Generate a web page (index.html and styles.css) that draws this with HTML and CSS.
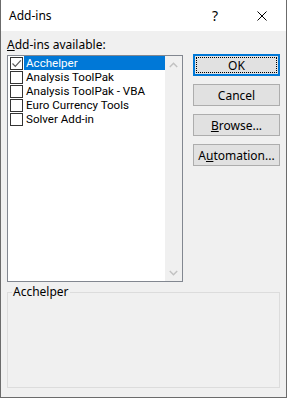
FILE: index.html
```html
<!DOCTYPE html>
<html lang="en">
<head>
  <meta charset="UTF-8" />
  <title>Add-ins</title>
  <link rel="stylesheet" href="styles.css">
</head>
<body>
  <div class="window">
    <div class="titlebar">
      <span class="title">Add-ins</span>
      <span class="help">?</span>
      <span class="close">
        <svg width="10" height="10" viewBox="0 0 10 10">
          <path d="M0.5 0.5 L9.5 9.5 M9.5 0.5 L0.5 9.5" stroke="#000" stroke-width="1" fill="none"/>
        </svg>
      </span>
    </div>

    <div class="content">
      <div class="main-row">
        <div class="list-col">
          <div class="list-label"><u>A</u>dd-ins available:</div>
          <div class="listbox">
            <div class="items">
              <div class="item">
                <span class="check checked">
                  <svg width="11" height="11" viewBox="0 0 11 11">
                    <path d="M1.5 5.5 L4.3 8.3 L9.8 2.3" stroke="#5a5a5a" stroke-width="1.2" fill="none"/>
                  </svg>
                </span>
                <span class="name selected">Acchelper</span>
              </div>
              <div class="item"><span class="check"></span><span class="name">Analysis ToolPak</span></div>
              <div class="item"><span class="check"></span><span class="name">Analysis ToolPak - VBA</span></div>
              <div class="item"><span class="check"></span><span class="name">Euro Currency Tools</span></div>
              <div class="item"><span class="check"></span><span class="name">Solver Add-in</span></div>
            </div>
            <div class="scrollbar">
              <div class="arrow">
                <svg width="9" height="6" viewBox="0 0 9 6">
                  <path d="M0.8 5 L4.5 1.3 L8.2 5" stroke="#c2c2c2" stroke-width="1.5" fill="none"/>
                </svg>
              </div>
              <div class="arrow">
                <svg width="9" height="6" viewBox="0 0 9 6">
                  <path d="M0.8 1 L4.5 4.7 L8.2 1" stroke="#c2c2c2" stroke-width="1.5" fill="none"/>
                </svg>
              </div>
            </div>
          </div>
        </div>

        <div class="buttons">
          <button class="btn default">OK</button>
          <button class="btn">Cancel</button>
          <button class="btn"><u>B</u>rowse...</button>
          <button class="btn">A<u>u</u>tomation...</button>
        </div>
      </div>

      <fieldset class="groupbox">
        <legend>Acchelper</legend>
      </fieldset>
    </div>
  </div>
</body>
</html>
```

FILE: styles.css
```css
body {
  margin: 0;
  font-family: "Noto Sans", sans-serif;
  font-size: 12px;
  color: #000;
  background: #f0f0f0;
}

.window {
  width: 287px;
  height: 398px;
  box-sizing: border-box;
  border: 1px solid #6b6b6b;
  border-top: none;
  background: #f0f0f0;
  display: flex;
  flex-direction: column;
}

.titlebar {
  height: 31px;
  background: #fff;
  display: flex;
  align-items: center;
  flex-shrink: 0;
}

.title {
  flex: 1;
  padding-left: 8px;
  font-size: 12px;
  line-height: 16px;
  padding-top: 1px;
}

.help {
  font-size: 14px;
  width: 14px;
  margin-right: 31px;
  line-height: 16px;
  padding-top: 1px;
}

.close {
  display: flex;
  width: 10px;
  height: 10px;
  margin-right: 19px;
  margin-top: 1px;
}

.content {
  flex: 1;
  padding: 6px 6px 0 6px;
  display: flex;
  flex-direction: column;
}

.main-row {
  display: flex;
  gap: 10px;
}

.list-col {
  width: 176px;
}

.list-label {
  line-height: 16px;
  margin-bottom: 2px;
}

.listbox {
  height: 227px;
  box-sizing: border-box;
  border: 1px solid #828790;
  background: #fff;
  display: flex;
}

.items {
  flex: 1;
}

.item {
  display: flex;
  align-items: center;
  height: 14px;
  padding-left: 2px;
}

.check {
  width: 13px;
  height: 13px;
  box-sizing: border-box;
  border: 1px solid #333;
  background: #fff;
  margin-right: 1px;
  display: flex;
  align-items: center;
  justify-content: center;
  flex-shrink: 0;
}

/* Roboto keeps the glyph box inside the 14px row */
.name {
  flex: 1;
  height: 14px;
  line-height: 14px;
  padding-left: 2px;
  font-family: Roboto, "Noto Sans", sans-serif;
  font-size: 11.6px;
  white-space: nowrap;
}

.name.selected {
  background: #0078d7;
  color: #fff;
}

.scrollbar {
  width: 17px;
  background: #f0f0f0;
  display: flex;
  flex-direction: column;
  justify-content: space-between;
}

.arrow {
  height: 17px;
  display: flex;
  align-items: center;
  justify-content: center;
}

.buttons {
  width: 87px;
  padding-top: 17px;
  display: flex;
  flex-direction: column;
  gap: 8px;
}

.btn {
  height: 22px;
  box-sizing: border-box;
  border: 1px solid #adadad;
  background: #e1e1e1;
  font-family: inherit;
  font-size: 12px;
  color: #000;
  padding: 0;
  margin: 0;
}

.btn.default {
  border: 2px solid #0078d7;
  outline: 1px dotted #000;
  outline-offset: -4px;
}

.groupbox {
  margin: 2px 0 0 0;
  height: 104px;
  box-sizing: border-box;
  border: 1px solid #dcdcdc;
  padding: 0;
}

.groupbox legend {
  margin-left: 4px;
  padding: 0 1px;
  line-height: 16px;
}
```
